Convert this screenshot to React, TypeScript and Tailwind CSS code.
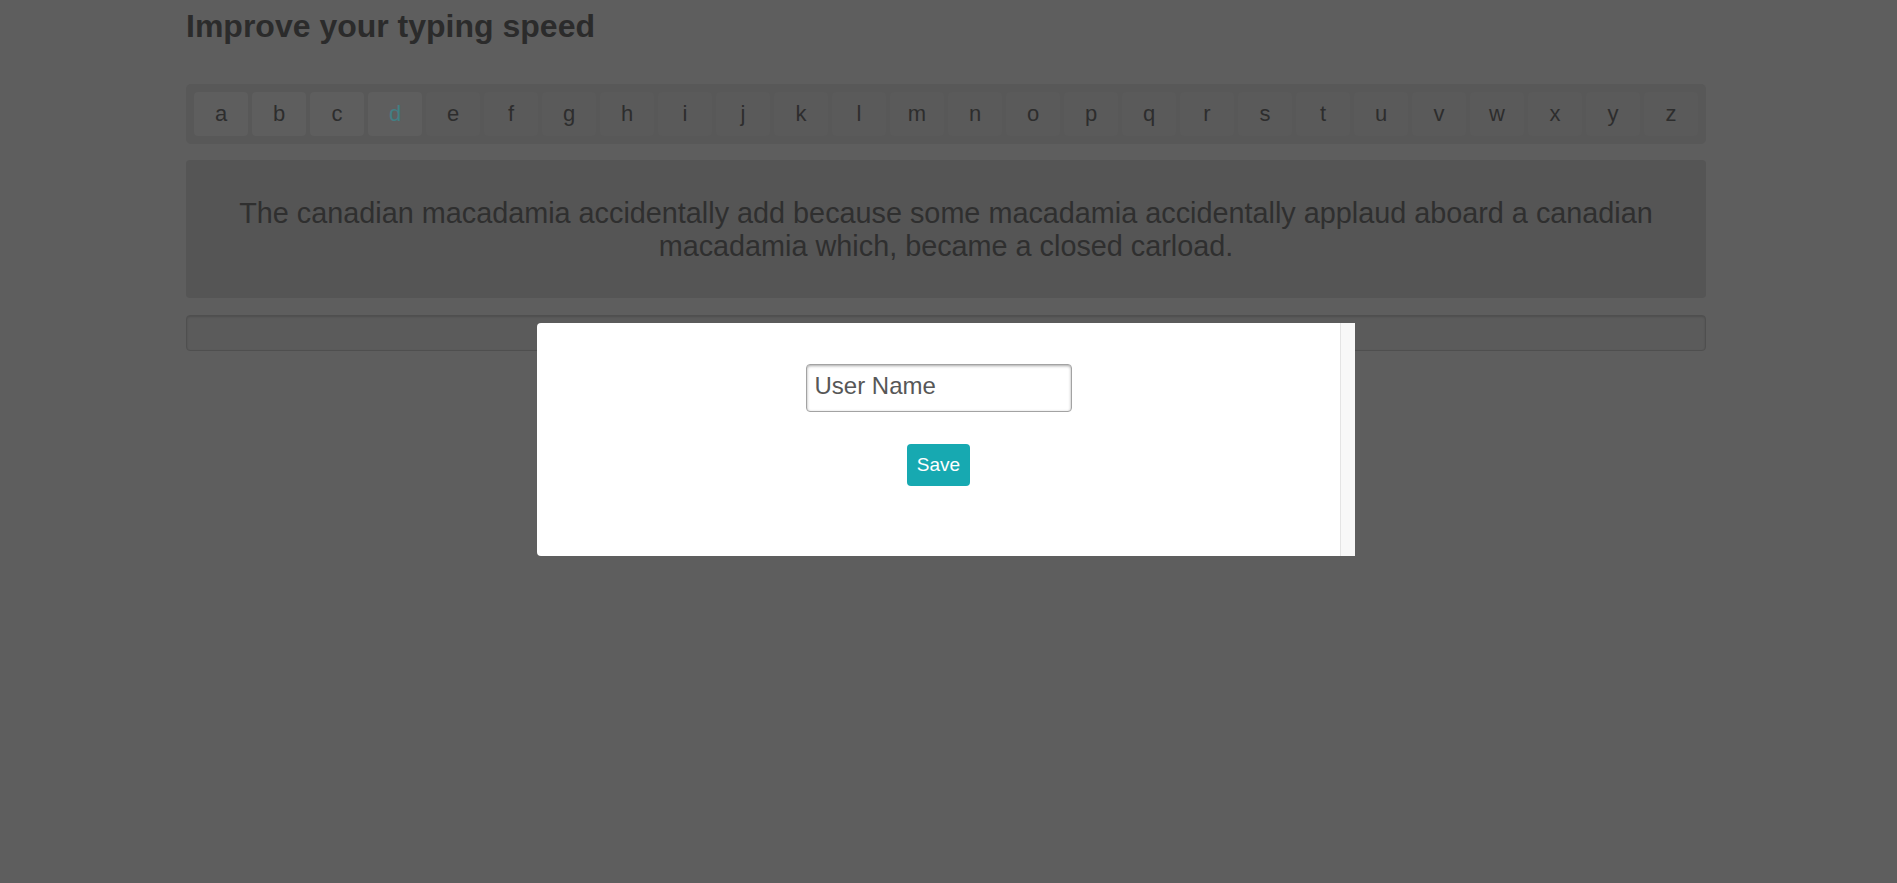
import React from "react";

const letters = "abcdefghijklmnopqrstuvwxyz".split("");

export default function App() {
  return (
    <div
      className="relative min-h-[883px] w-full bg-[#5e5e5e]"
      style={{ fontFamily: '"Liberation Sans", Arial, sans-serif' }}
    >
      <div className="ml-[186px] w-[1520px] pt-[8px]">
        <h1 className="text-[32px] font-bold leading-[37px] text-[#2b2b2b]">
          Improve your typing speed
        </h1>

        <div className="mt-[39px] flex h-[60px] gap-[4px] rounded-[5px] bg-[#585858] p-[8px]">
          {letters.map((l, i) => (
            <div
              key={l}
              className={
                i < 4
                  ? "flex h-[44px] w-[54px] items-center justify-center rounded-[4px] bg-[#5e5e5e] text-[22px] leading-[44px]"
                  : "flex h-[44px] w-[54px] items-center justify-center rounded-[4px] bg-[#5a5a5a] text-[22px] leading-[44px]"
              }
            >
              <span className={i === 3 ? "text-[#427f84]" : "text-[#2d2d2d]"}>{l}</span>
            </div>
          ))}
        </div>

        <div className="mt-[16px] h-[138px] rounded-[4px] bg-[#555555] px-[40px] pb-[35px] pt-[37px] text-center text-[28.8px] leading-[33px] text-[#2f2f2f]">
          The canadian macadamia accidentally add because some macadamia accidentally applaud aboard a canadian macadamia which, became a closed carload.
        </div>

        <div className="mt-[17px] h-[36px] rounded-[4px] border border-[#4f4f4f] bg-[#5b5b5b] shadow-[inset_0_1px_2px_rgba(0,0,0,0.15)]" />
      </div>

      <div className="absolute left-[537px] top-[323px] flex h-[233px] w-[818px] overflow-hidden rounded-l-[4px] bg-white">
        <div className="flex flex-1 flex-col items-center pt-[41px]">
          <div className="flex h-[48px] w-[266px] items-center rounded-[4px] border border-[#a3a3a3] bg-white pb-[4px] pl-[8px] shadow-[inset_0_1px_3px_rgba(0,0,0,0.35)]">
            <span className="text-[24px] leading-none text-[#575757]">User Name</span>
          </div>
          <button className="mt-[32px] flex h-[42px] w-[63px] items-center justify-center rounded-[4px] bg-[#17a9b1] text-[19px] text-white">
            Save
          </button>
        </div>
        <div className="h-full w-[15px] border-l border-[#e4e4e4] bg-[#f8f8f8]" />
      </div>
    </div>
  );
}
